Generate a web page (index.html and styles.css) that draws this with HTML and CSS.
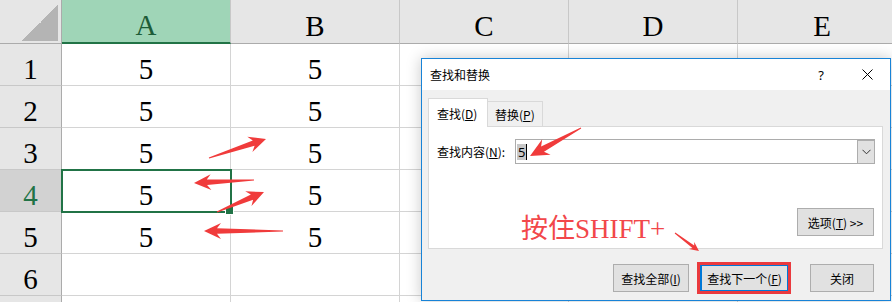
FILE: index.html
```html
<!DOCTYPE html>
<html lang="zh-CN">
<head>
    <meta charset="UTF-8">
    <title>查找和替换</title>
    <link rel="stylesheet" href="styles.css">
</head>
<body>

    <!-- SPREADSHEET -->
    <div class="sheet">
        <div class="corner"><div class="corner-mark"></div></div>
        <div class="col-head selected">A</div>
        <div class="col-head">B</div>
        <div class="col-head">C</div>
        <div class="col-head">D</div>
        <div class="col-head">E</div>

        <div class="row-head">1</div><div class="cell">5</div><div class="cell">5</div><div class="cell"></div><div class="cell"></div><div class="cell"></div>
        <div class="row-head">2</div><div class="cell">5</div><div class="cell">5</div><div class="cell"></div><div class="cell"></div><div class="cell"></div>
        <div class="row-head">3</div><div class="cell">5</div><div class="cell">5</div><div class="cell"></div><div class="cell"></div><div class="cell"></div>
        <div class="row-head selected">4</div><div class="cell active">5</div><div class="cell">5</div><div class="cell"></div><div class="cell"></div><div class="cell"></div>
        <div class="row-head">5</div><div class="cell">5</div><div class="cell">5</div><div class="cell"></div><div class="cell"></div><div class="cell"></div>
        <div class="row-head">6</div><div class="cell"></div><div class="cell"></div><div class="cell"></div><div class="cell"></div><div class="cell"></div>
        <div class="row-head"></div><div class="cell"></div><div class="cell"></div><div class="cell"></div><div class="cell"></div><div class="cell"></div>
    </div>

    <!-- FIND & REPLACE DIALOG -->
    <div class="dialog">
        <div class="title-bar">
            <span class="title">查找和替换</span>
            <span class="tb-btn">?</span>
            <span class="tb-btn">
                <svg width="11" height="11" viewBox="0 0 11 11"><path d="M0.5 0.5 L10.5 10.5 M10.5 0.5 L0.5 10.5" stroke="#000" stroke-width="1" fill="none"/></svg>
            </span>
        </div>

        <div class="dialog-body">
            <div class="tabs">
                <div class="tab active">查找(<u>D</u>)</div>
                <div class="tab">替换(<u>P</u>)</div>
            </div>

            <div class="panel">
                <div class="find-row">
                    <label>查找内容(<u>N</u>):</label>
                    <div class="combo">
                        <span class="value"><span class="sel">5</span><span class="caret"></span></span>
                        <span class="drop">
                            <svg width="9" height="6" viewBox="0 0 9 6"><path d="M0.5 0.8 L4.5 4.8 L8.5 0.8" stroke="#333" stroke-width="1" fill="none"/></svg>
                        </span>
                    </div>
                </div>
                <div class="options-row">
                    <button class="btn options">选项(<u>T</u>) &gt;&gt;</button>
                </div>
            </div>

            <div class="actions">
                <button class="btn find-all">查找全部(<u>I</u>)</button>
                <span class="mark-box"><button class="btn find-next">查找下一个(<u>F</u>)</button></span>
                <button class="btn close">关闭</button>
            </div>
        </div>
    </div>

    <!-- ANNOTATIONS -->
    <div class="note">按住SHIFT+</div>
    <svg class="arrows" id="arrows" width="892" height="302"></svg>

    <script>
        // tail x, tail y, tip x, tip y, scale
        const arrows = [
            [209, 158, 266, 139, 1],
            [254, 180, 194, 183, 1],
            [217, 212, 264, 192, 1],
            [283, 231, 204, 231, 1],
            [581, 128, 530, 156, 1.1],
            [675, 233, 699, 251, 0.55]
        ];

        function arrowPoints(x1, y1, x2, y2, s) {
            const dx = x2 - x1, dy = y2 - y1;
            const len = Math.hypot(dx, dy);
            const ux = dx / len, uy = dy / len;
            const nx = -uy, ny = ux;
            const head = 17 * s, wing = 8 * s, neck = 2.8 * s, tail = 0.5;
            const bx = x2 - ux * head, by = y2 - uy * head;
            const kx = bx + ux * 4 * s, ky = by + uy * 4 * s;
            const pts = [
                [x1 + nx * tail, y1 + ny * tail],
                [kx + nx * neck, ky + ny * neck],
                [bx + nx * wing, by + ny * wing],
                [x2, y2],
                [bx - nx * wing, by - ny * wing],
                [kx - nx * neck, ky - ny * neck],
                [x1 - nx * tail, y1 - ny * tail]
            ];
            return pts.map(p => p[0].toFixed(1) + ',' + p[1].toFixed(1)).join(' ');
        }

        const svg = document.getElementById('arrows');
        arrows.forEach(a => {
            const poly = document.createElementNS('http://www.w3.org/2000/svg', 'polygon');
            poly.setAttribute('points', arrowPoints(...a));
            poly.setAttribute('fill', '#f03b3b');
            svg.appendChild(poly);
        });
    </script>
</body>
</html>
```

FILE: styles.css
```css
* { margin: 0; padding: 0; box-sizing: border-box; }

body {
    width: 892px;
    height: 302px;
    overflow: hidden;
    position: relative;
    background: #fff;
    font-family: "Liberation Serif", serif;
}

/* --- SPREADSHEET GRID --- */
.sheet {
    display: grid;
    grid-template-columns: 62px repeat(5, 169px);
    grid-template-rows: 44px repeat(6, 42px) 20px;
}

.sheet > div {
    display: flex;
    align-items: center;
    justify-content: center;
    padding-top: 9px;
    font-size: 29px;
    color: #000;
    border-right: 1px solid #d4d4d4;
    border-bottom: 1px solid #d4d4d4;
}

.sheet > .corner {
    background: #e6e6e6;
    border-right: 1px solid #ababab;
    border-bottom: 1px solid #ababab;
    align-items: flex-end;
    justify-content: flex-end;
    padding: 0 3px 2px 0;
}

.corner-mark {
    width: 36px;
    height: 36px;
    background: linear-gradient(to top left, #b4b4b4 50%, transparent 50%);
}

.sheet > .col-head {
    background: #e6e6e6;
    border-right-color: #c8c8c8;
    border-bottom: 1px solid #ababab;
}

.sheet > .col-head.selected {
    background: #9fd5b7;
    color: #1d5c38;
    border-bottom: 2px solid #217346;
}

.sheet > .row-head {
    background: #e6e6e6;
    border-right: 1px solid #ababab;
    border-bottom-color: #c8c8c8;
}

.sheet > .row-head.selected {
    background: #d2d2d2;
    color: #217346;
}

.sheet > .cell.active {
    position: relative;
    z-index: 2;
    outline: 2px solid #217346;
    outline-offset: -1px;
}

.cell.active::after {
    content: "";
    position: absolute;
    right: -4px;
    bottom: -4px;
    width: 7px;
    height: 7px;
    background: #217346;
    border: 1px solid #fff;
}

/* --- DIALOG WINDOW --- */
.dialog {
    position: absolute;
    left: 421px;
    top: 58px;
    width: 470px;
    height: 243px;
    border: 1px solid #1883d7;
    background: #f0f0f0;
    box-shadow: 0 0 14px rgba(0, 0, 0, 0.22);
    font-family: "Noto Sans CJK SC", "Noto Sans", sans-serif;
    font-size: 12px;
    color: #000;
    display: flex;
    flex-direction: column;
    z-index: 5;
}

.title-bar {
    height: 31px;
    background: #fff;
    display: flex;
    align-items: center;
}

.title { flex: 1; padding-left: 8px; font-size: 12px; }

.tb-btn {
    width: 46px;
    height: 31px;
    display: flex;
    align-items: center;
    justify-content: center;
    font-family: "Noto Sans", sans-serif;
    font-size: 13px;
}

.dialog-body {
    flex: 1;
    padding: 8px 7px 0 6px;
    display: flex;
    flex-direction: column;
}

.tabs {
    display: flex;
    align-items: flex-end;
    height: 28px;
}

.tab {
    height: 25px;
    padding: 0 7px;
    display: flex;
    align-items: center;
    white-space: nowrap;
    border: 1px solid #d9d9d9;
    border-bottom: none;
    border-left: none;
    background: #f0f0f0;
}

.tab.active {
    min-width: 60px;
    height: 29px;
    margin-bottom: -1px;
    padding-left: 8px;
    border-left: 1px solid #d9d9d9;
    background: #fff;
    position: relative;
    z-index: 1;
}

.panel {
    height: 123px;
    background: #fff;
    border: 1px solid #d9d9d9;
    padding: 12px 7px 12px 8px;
    display: flex;
    flex-direction: column;
    justify-content: space-between;
}

.find-row {
    display: flex;
    align-items: center;
    height: 25px;
}

.find-row label { width: 78px; white-space: nowrap; }

.combo {
    flex: 1;
    height: 25px;
    border: 1px solid #acacac;
    display: flex;
    align-items: stretch;
    background: #fff;
}

.value {
    flex: 1;
    display: flex;
    align-items: center;
    padding-left: 1px;
    font-family: "Noto Sans", sans-serif;
    font-size: 13px;
}

.sel { background: #c8c8c8; line-height: 16px; padding: 0 1px; }
.caret { width: 1px; height: 16px; background: #000; }

.drop {
    width: 17px;
    background: #e1e1e1;
    border-left: 1px solid #adadad;
    border-top: 1px solid #adadad;
    display: flex;
    align-items: center;
    justify-content: center;
}

.options-row { display: flex; justify-content: flex-end; padding-right: 1px; }

.btn {
    height: 28px;
    background: #e1e1e1;
    border: 1px solid #adadad;
    font-family: "Noto Sans CJK SC", "Noto Sans", sans-serif;
    font-size: 12px;
    color: #000;
    white-space: nowrap;
}

.options { width: 77px; }

.actions {
    margin-top: 13px;
    display: flex;
    align-items: center;
    justify-content: flex-end;
    padding-right: 9px;
}

.find-all { width: 76px; margin-right: 8px; }

.mark-box {
    display: flex;
    border: 3px solid #ea3a3e;
    margin-right: 19px;
}

.find-next {
    width: 88px;
    height: 26px;
    border: 1px solid #0078d7;
    border-left-width: 2px;
}

.close { width: 64px; }

/* --- ANNOTATIONS --- */
.note {
    position: absolute;
    left: 521px;
    top: 207px;
    font-family: "Liberation Serif", "Noto Sans CJK SC", serif;
    font-size: 27px;
    color: #f2474a;
    z-index: 8;
}

.arrows {
    position: absolute;
    left: 0;
    top: 0;
    pointer-events: none;
    z-index: 9;
}
```
